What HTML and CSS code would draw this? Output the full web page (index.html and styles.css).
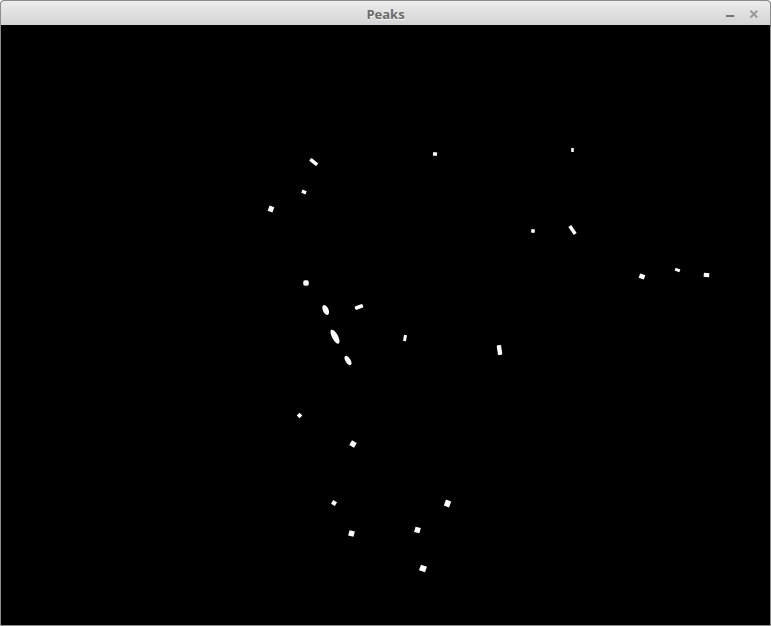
FILE: index.html
```html
<!DOCTYPE html>
<html lang="en">
<head>
<meta charset="utf-8">
<title>Peaks</title>
<link rel="stylesheet" href="styles.css">
</head>
<body>
<div class="window">
  <div class="titlebar">
    <div class="spacer"></div>
    <div class="title">Peaks</div>
    <div class="controls">
      <svg class="ctl" width="10" height="10" viewBox="0 0 10 10"><line x1="1" y1="7" x2="9.3" y2="7" stroke="#777" stroke-width="2"/></svg>
      <svg class="ctl" width="10" height="10" viewBox="0 0 10 10"><path d="M1.5 1.8 L8.2 8.5 M8.2 1.8 L1.5 8.5" stroke="#9a9a9a" stroke-width="2" fill="none"/></svg>
    </div>
  </div>
  <svg class="canvas" width="769" height="600" viewBox="1 25 769 600">
    <rect x="1" y="25" width="769" height="600" fill="#000"/>
    <g fill="#fff">
      <rect x="-4.5" y="-1.75" width="9" height="3.5" rx="0.8" transform="translate(313.7 162) rotate(38)"/>
      <rect x="-2" y="-1.75" width="4" height="3.5" transform="translate(435 154) rotate(10)"/>
      <rect x="-2.25" y="-1.75" width="4.5" height="3.5" transform="translate(304 192) rotate(20)"/>
      <rect x="-2.5" y="-2.75" width="5" height="5.5" transform="translate(271 209) rotate(20)"/>
      <rect x="-1.25" y="-2" width="2.5" height="4" transform="translate(572.5 150)"/>
      <rect x="-1.75" y="-1.75" width="3.5" height="3.5" transform="translate(533 231) rotate(10)"/>
      <rect x="-1.75" y="-4.75" width="3.5" height="9.5" transform="translate(572.5 230) rotate(-35)"/>
      <rect x="-2.75" y="-2.25" width="5.5" height="4.5" transform="translate(642 276.5) rotate(20)"/>
      <rect x="-2.5" y="-1.5" width="5" height="3" transform="translate(677.5 270) rotate(20)"/>
      <rect x="-2.75" y="-2" width="5.5" height="4" transform="translate(706.5 275) rotate(5)"/>
      <rect x="-2.75" y="-2.75" width="5.5" height="5.5" rx="1.8" transform="translate(306 283)"/>
      <ellipse rx="2.8" ry="5.3" transform="translate(325.7 310) rotate(-25)"/>
      <rect x="-4.2" y="-1.9" width="8.4" height="3.8" rx="1.2" transform="translate(359 307) rotate(-20)"/>
      <ellipse rx="3" ry="7.8" transform="translate(335 336.7) rotate(-28)"/>
      <ellipse rx="2.5" ry="5.2" transform="translate(348 360.5) rotate(-30)"/>
      <rect x="-1.5" y="-3" width="3" height="6" transform="translate(405 338) rotate(10)"/>
      <rect x="-2.2" y="-4.9" width="4.4" height="9.8" rx="1" transform="translate(499.5 350) rotate(-8)"/>
      <rect x="-2" y="-2" width="4" height="4" transform="translate(299.5 415.5) rotate(45)"/>
      <rect x="-2.75" y="-2.75" width="5.5" height="5.5" transform="translate(353 444) rotate(30)"/>
      <rect x="-2.2" y="-2.2" width="4.4" height="4.4" transform="translate(334 503) rotate(30)"/>
      <rect x="-2.75" y="-2.75" width="5.5" height="5.5" transform="translate(351.5 533.5) rotate(15)"/>
      <rect x="-2.75" y="-3.2" width="5.5" height="6.4" transform="translate(447.5 503.5) rotate(20)"/>
      <rect x="-2.75" y="-2.75" width="5.5" height="5.5" transform="translate(417.5 530) rotate(15)"/>
      <rect x="-3.2" y="-2.9" width="6.4" height="5.8" transform="translate(423 568.5) rotate(20)"/>
    </g>
  </svg>
</div>
</body>
</html>
```
FILE: styles.css
```css
html, body {
  margin: 0;
  padding: 0;
  background: #ffffff;
}

.window {
  box-sizing: border-box;
  width: 771px;
  height: 626px;
  border: 1px solid #8c8c8c;
  border-radius: 4px 4px 0 0;
  display: flex;
  flex-direction: column;
  overflow: hidden;
  background: #000;
}

.titlebar {
  height: 24px;
  flex: 0 0 24px;
  display: grid;
  grid-template-columns: 1fr auto 1fr;
  align-items: center;
  background: linear-gradient(to bottom, #ececec, #d4d4d4);
}

.title {
  font-family: "Open Sans", "DejaVu Sans", sans-serif;
  font-weight: 700;
  font-size: 13px;
  line-height: 24px;
  padding-top: 1px;
  color: #6b6b6b;
  text-shadow: 0 1px 0 rgba(255, 255, 255, 0.8);
}

.controls {
  justify-self: end;
  display: flex;
  align-items: center;
  gap: 14px;
  padding-right: 11px;
}

.ctl {
  display: block;
}

.canvas {
  display: block;
  flex: 0 0 600px;
}
```
